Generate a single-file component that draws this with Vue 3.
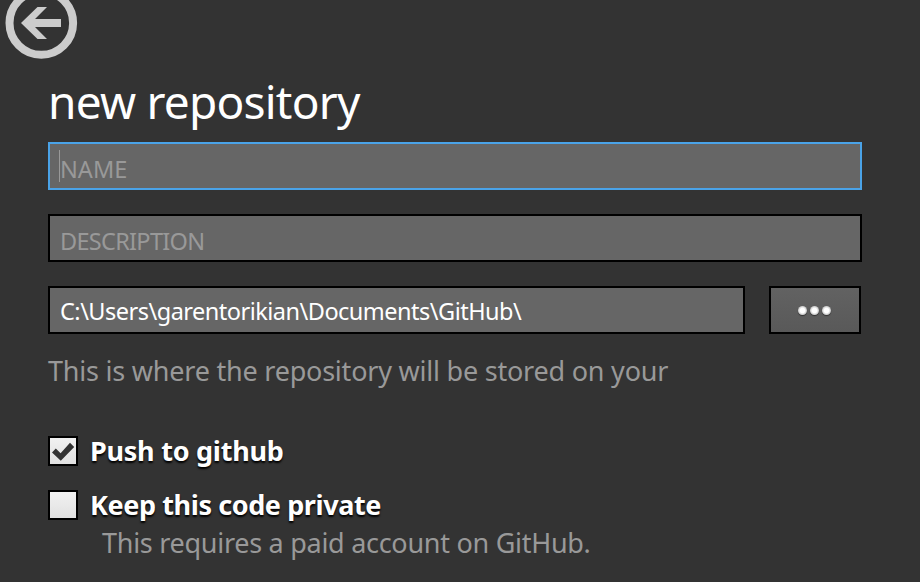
<script setup>
import { ref } from 'vue'

const path = ref('C:\\Users\\garentorikian\\Documents\\GitHub\\')
const push = ref(true)
const keepPrivate = ref(false)
</script>

<template>
  <main class="page">
    <header class="top">
      <svg class="back" width="80" height="60" viewBox="0 0 80 60" role="button" aria-label="Back">
        <circle cx="41.3" cy="23" r="31.8" fill="none" stroke="#cccccc" stroke-width="8" />
        <path d="M21 23 L37.5 7 H47 L35 19 H61 V27 H35 L47 39 H37.5 Z" fill="#cccccc" />
      </svg>
    </header>
    <section class="form">
      <h1 class="title">new repository</h1>
      <div class="field focused"><i class="caret"></i><span class="placeholder">NAME</span></div>
      <div class="field"><span class="placeholder desc">DESCRIPTION</span></div>
      <div class="row">
        <div class="field path"><span class="value">{{ path }}</span></div>
        <button class="browse" aria-label="Browse">
          <i class="dot"></i><i class="dot"></i><i class="dot"></i>
        </button>
      </div>
      <p class="hint stored">This is where the repository will be stored on your</p>
      <div class="option" @click="push = !push">
        <span class="box">
          <svg v-if="push" width="26" height="26" viewBox="0 0 26 26">
            <path d="M2 14.4 L5.8 10.6 L10.6 15.2 L20 4.8 L24.2 9 L10.8 22.8 Z" fill="#333333" />
          </svg>
        </span>
        <span class="label push">Push to github</span>
      </div>
      <div class="option second" @click="keepPrivate = !keepPrivate">
        <span class="box">
          <svg v-if="keepPrivate" width="26" height="26" viewBox="0 0 26 26">
            <path d="M2 14.4 L5.8 10.6 L10.6 15.2 L20 4.8 L24.2 9 L10.8 22.8 Z" fill="#333333" />
          </svg>
        </span>
        <span class="label keep">Keep this code private</span>
      </div>
      <p class="hint paid">This requires a paid account on GitHub.</p>
    </section>
  </main>
</template>

<style>
body {
  background: #333333;
  overflow: hidden;
}
</style>

<style scoped>
.page {
  box-sizing: border-box;
  width: 920px;
  height: 582px;
  overflow: hidden;
  background: #333333;
  color: #ffffff;
  font-family: "Noto Sans", "Open Sans", sans-serif;
  white-space: nowrap;
}
.top {
  height: 71px;
}
.back {
  display: block;
}
.form {
  display: flex;
  flex-direction: column;
  padding: 0 58px 0 48px;
}
.title {
  margin: 0 0 11px;
  height: 60px;
  line-height: 60px;
  font-size: 46px;
  font-weight: 400;
  letter-spacing: -0.78px;
}
.field {
  box-sizing: border-box;
  display: flex;
  height: 48px;
  padding: 6px 9px 0;
  margin-bottom: 24px;
  border: 2px solid #000000;
  background: #666666;
  font-size: 23.5px;
  line-height: 38px;
}
.focused {
  border-color: #4aa3e8;
}
.caret {
  width: 1px;
  height: 32px;
  margin-right: -1px;
  background: #999999;
}
.placeholder {
  color: #999999;
  padding-left: 1px;
}
.desc {
  letter-spacing: -0.7px;
}
.row {
  display: flex;
  gap: 24px;
}
.path {
  width: 697px;
  padding: 4px 10px 0;
  letter-spacing: -0.51px;
}
.browse {
  box-sizing: border-box;
  width: 92px;
  height: 48px;
  padding: 0 1px 0 0;
  display: flex;
  align-items: center;
  justify-content: center;
  gap: 3px;
  border: 2px solid #000000;
  border-radius: 0;
  background: linear-gradient(#626262, #595959);
}
.dot {
  width: 9px;
  height: 9px;
  border-radius: 50%;
  background: radial-gradient(#ffffff 35%, #c4c4c4 70%);
  box-shadow: 0 1px 1px #333333;
}
.hint {
  margin: 0;
  height: 36px;
  line-height: 36px;
  font-size: 27px;
  color: #999999;
}
.stored {
  margin: -5px 0 47px;
  letter-spacing: -0.22px;
}
.option {
  display: flex;
  align-items: center;
  gap: 12px;
  height: 30px;
}
.second {
  margin-top: 24px;
}
.box {
  box-sizing: border-box;
  width: 30px;
  height: 30px;
  border: 2px solid #000000;
  background: linear-gradient(#f1f1f1, #e1e1e1);
}
.box svg {
  display: block;
}
.label {
  font-size: 27px;
  font-weight: 700;
  line-height: 30px;
  text-shadow: 0 2px 2px #000000;
}
.push {
  letter-spacing: -0.25px;
}
.keep {
  letter-spacing: -0.4px;
}
.paid {
  margin: 5px 0 0 54px;
  letter-spacing: -0.28px;
}
</style>
